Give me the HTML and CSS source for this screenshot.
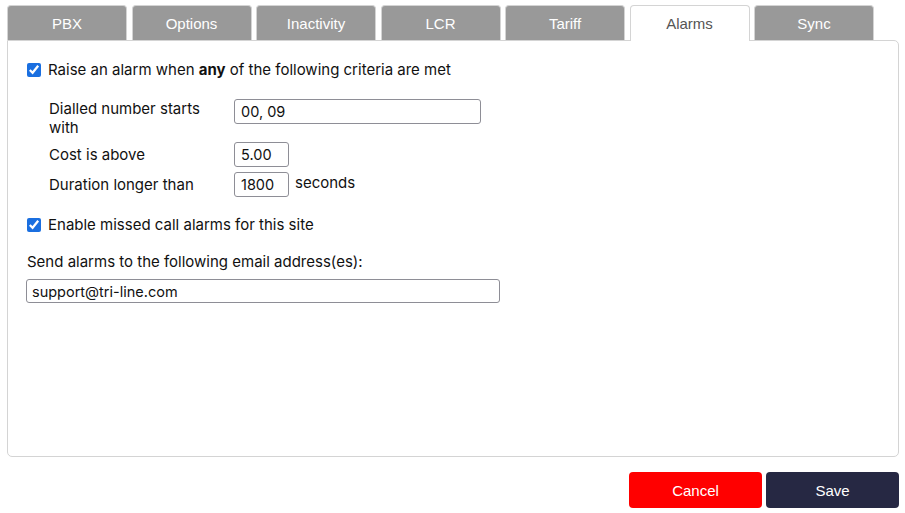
FILE: index.html
```html
<!DOCTYPE html>
<html>
<head>
<meta charset="utf-8">
<link rel="stylesheet" href="styles.css">
</head>
<body>
<div class="page">
  <div class="tabs">
    <div class="tab">PBX</div>
    <div class="tab">Options</div>
    <div class="tab">Inactivity</div>
    <div class="tab">LCR</div>
    <div class="tab">Tariff</div>
    <div class="tab active">Alarms</div>
    <div class="tab">Sync</div>
  </div>
  <div class="panel">
    <label class="check-row first">
      <input type="checkbox" checked>
      <span>Raise an alarm when <b>any</b> of the following criteria are met</span>
    </label>
    <div class="criteria">
      <div class="lbl">Dialled number starts with</div>
      <div class="field"><input class="txt wide" type="text" value="00, 09"></div>
      <div class="lbl single">Cost is above</div>
      <div class="field"><input class="txt short" type="text" value="5.00"></div>
      <div class="lbl single">Duration longer than</div>
      <div class="field"><input class="txt short" type="text" value="1800"><span class="unit">seconds</span></div>
    </div>
    <label class="check-row second">
      <input type="checkbox" checked>
      <span>Enable missed call alarms for this site</span>
    </label>
    <div class="email-label">Send alarms to the following email address(es):</div>
    <input class="txt email" type="text" value="support@tri-line.com">
  </div>
  <div class="actions">
    <button class="btn cancel">Cancel</button>
    <button class="btn save">Save</button>
  </div>
</div>
</body>
</html>
```
FILE: styles.css
```css
html, body {
  margin: 0;
  padding: 0;
  background: #fff;
}
body {
  font-family: Inter, "Liberation Sans", Arial, sans-serif;
  font-size: 15px;
  color: #111;
}
.page {
  padding: 5px 6px 0 7px;
}
.tabs {
  display: flex;
  gap: 4.5px;
  height: 35px;
  position: relative;
  z-index: 1;
}
.tab {
  width: 118px;
  height: 34px;
  background: #999;
  border: 1px solid #d4d4d4;
  border-bottom: none;
  border-radius: 4px 4px 0 0;
  color: #fff;
  font-family: "Liberation Sans", Arial, sans-serif;
  font-size: 15px;
  display: flex;
  align-items: center;
  justify-content: center;
  box-sizing: content-box;
}
.tab.active {
  background: #fff;
  color: #555;
  height: 35px;
}
.panel {
  border: 1px solid #d4d4d4;
  border-radius: 0 5px 5px 5px;
  height: 417px;
  box-sizing: border-box;
  padding: 20px 19px 0 19px;
}
.check-row {
  display: flex;
  align-items: center;
  gap: 7px;
  height: 18px;
  line-height: 18px;
}
.check-row input {
  width: 14px;
  height: 14px;
  margin: 0;
  accent-color: #1a6fe0;
}
.check-row b {
  font-weight: 700;
}
.criteria {
  display: grid;
  grid-template-columns: 185px auto;
  row-gap: 5px;
  margin: 20px 0 0 22px;
  align-items: start;
}
.lbl {
  width: 165px;
  line-height: 19px;
}
.lbl.single {
  line-height: 25px;
}
.field {
  display: flex;
  align-items: center;
}
.txt {
  font-family: Inter, "Liberation Sans", Arial, sans-serif;
  font-size: 14.5px;
  color: #111;
  height: 25px;
  box-sizing: border-box;
  border: 1px solid #8e8e96;
  border-radius: 3px;
  padding: 0 6px;
  margin: 0;
}
.wide { width: 247px; }
.short { width: 55px; }
.unit {
  margin-left: 6px;
  margin-top: -4px;
}
.second {
  margin-top: 19px;
}
.email-label {
  margin-top: 19px;
  line-height: 18px;
}
.email {
  width: 474px;
  height: 24px;
  margin: 8px 0 0 -1px;
  display: block;
  padding: 0 5px;
}
.actions {
  display: flex;
  justify-content: flex-end;
  gap: 4px;
  margin-top: 15px;
}
.btn {
  width: 133px;
  height: 36px;
  border: none;
  border-radius: 4px;
  color: #fff;
  font-family: "Liberation Sans", Arial, sans-serif;
  font-size: 15px;
}
.cancel { background: #ff0000; }
.save { background: #262843; }
```
